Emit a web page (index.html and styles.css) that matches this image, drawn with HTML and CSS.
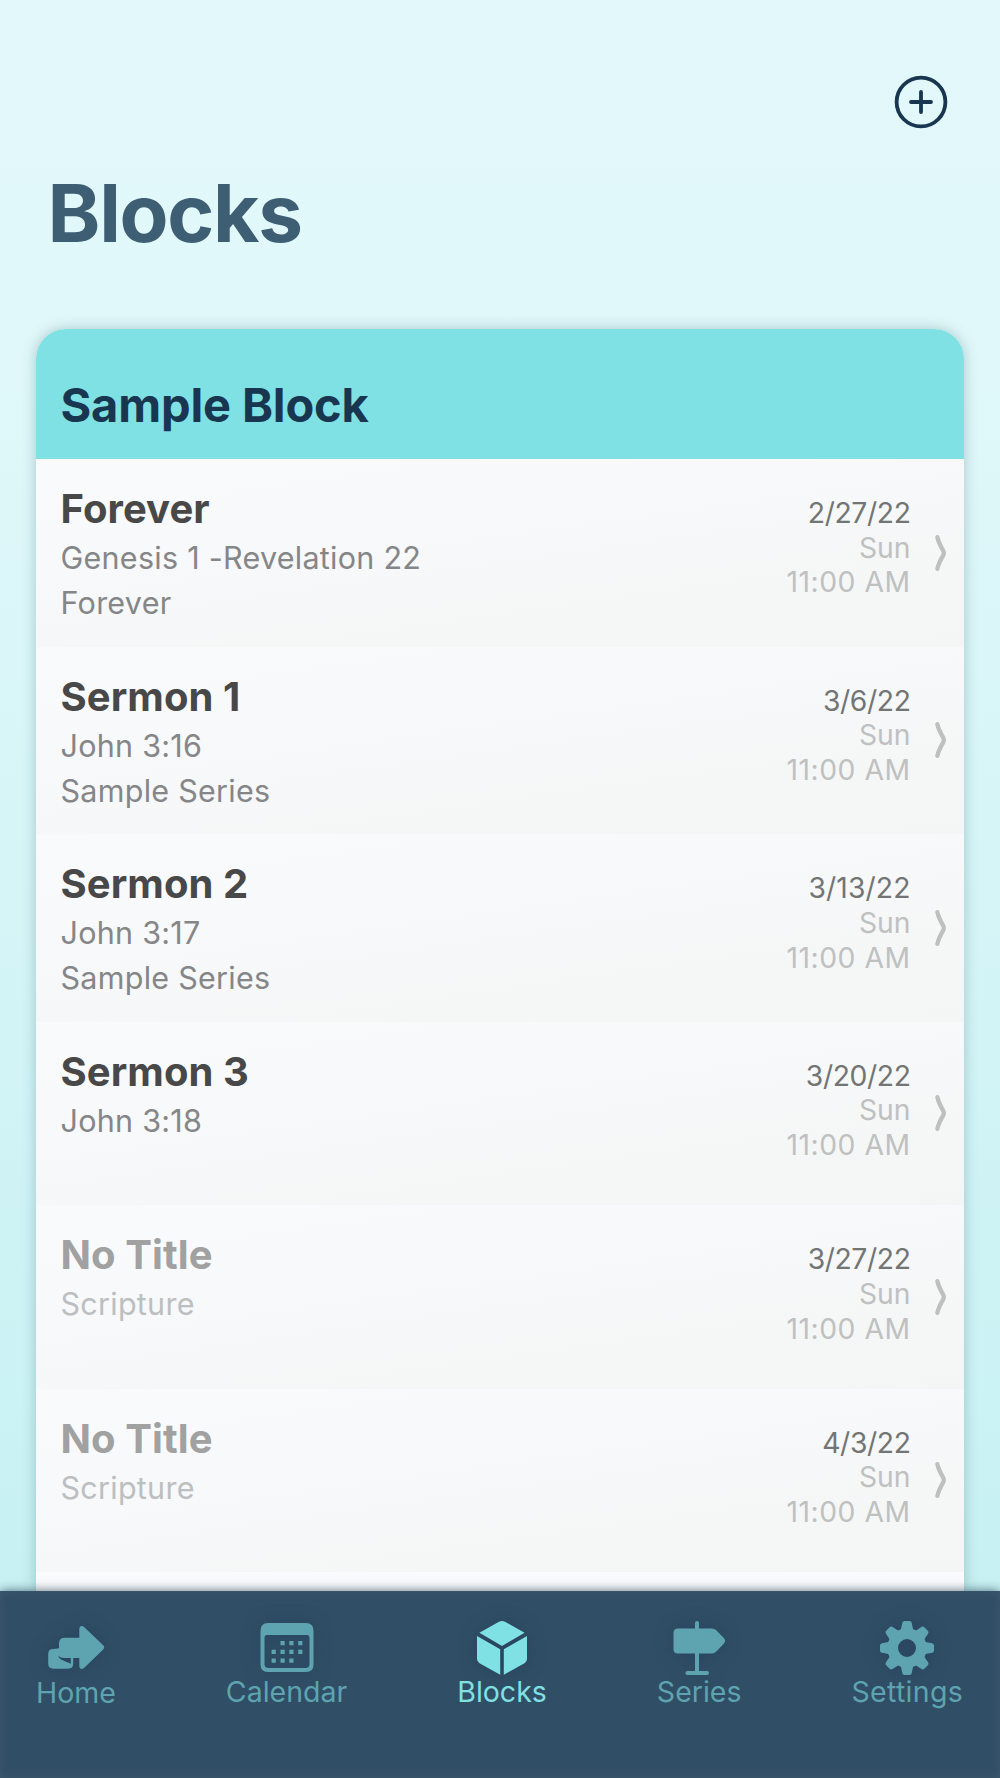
FILE: index.html
```
<!DOCTYPE html>
<html lang="en">
<head>
<meta charset="utf-8">
<title>Blocks</title>
<link rel="stylesheet" href="styles.css">
</head>
<body>
<svg class="defs" width="0" height="0" aria-hidden="true">
  <symbol id="chevron" viewBox="0 0 12 36"><path d="M2.400 2.200Q3.500 7.500 8.200 15.600Q9.400 18 8.200 20.400Q3.500 28.500 2.400 33.800" fill="none" stroke="currentColor" stroke-width="4.300" stroke-linecap="round" stroke-linejoin="round"/></symbol>
</svg>
<div class="app">
  <header class="top">
    <button class="add" aria-label="Add block">
      <svg width="54" height="54" viewBox="0 0 54 54" fill="none" stroke="currentColor" stroke-width="3.800"><circle cx="27" cy="27" r="24.400"/><path d="M27 17v20M17 27h20" stroke-linecap="round"/></svg>
    </button>
    <h1 class="page-title">Blocks</h1>
  </header>
  <main class="card">
    <h2 class="card-title">Sample Block</h2>
    <ul class="rows">
      <li class="row">
        <div class="info"><h3>Forever</h3><p>Genesis 1 -Revelation 22</p><p>Forever</p></div>
        <div class="when"><time>2/27/22</time><span>Sun</span><span class="hour">11:00 AM</span></div>
        <svg class="chevron"><use href="#chevron"/></svg>
      </li>
      <li class="row">
        <div class="info"><h3>Sermon 1</h3><p>John 3:16</p><p>Sample Series</p></div>
        <div class="when"><time>3/6/22</time><span>Sun</span><span class="hour">11:00 AM</span></div>
        <svg class="chevron"><use href="#chevron"/></svg>
      </li>
      <li class="row">
        <div class="info"><h3>Sermon 2</h3><p>John 3:17</p><p>Sample Series</p></div>
        <div class="when"><time class="wide">3/13/22</time><span>Sun</span><span class="hour">11:00 AM</span></div>
        <svg class="chevron"><use href="#chevron"/></svg>
      </li>
      <li class="row short">
        <div class="info"><h3>Sermon 3</h3><p>John 3:18</p></div>
        <div class="when"><time>3/20/22</time><span>Sun</span><span class="hour">11:00 AM</span></div>
        <svg class="chevron"><use href="#chevron"/></svg>
      </li>
      <li class="row short empty">
        <div class="info"><h3>No Title</h3><p>Scripture</p></div>
        <div class="when"><time>3/27/22</time><span>Sun</span><span class="hour">11:00 AM</span></div>
        <svg class="chevron"><use href="#chevron"/></svg>
      </li>
      <li class="row short empty">
        <div class="info"><h3>No Title</h3><p>Scripture</p></div>
        <div class="when"><time>4/3/22</time><span>Sun</span><span class="hour">11:00 AM</span></div>
        <svg class="chevron"><use href="#chevron"/></svg>
      </li>
    </ul>
  </main>
  <nav class="tabs">
    <a class="tab home">
      <svg width="58" height="58" viewBox="0 0 58 58" fill="currentColor"><path fill-rule="evenodd" d="M12 28.200V23.500Q12 17.700 17.800 17.700H32.300V9.500Q32.300 6 34.700 6Q36 6 37.300 7.200L56.200 25.300Q58.200 27.300 56.200 29.400L37.300 47.700Q36 48.900 34.700 48.900Q32.300 48.900 32.300 45.500V38H26.200V43.500Q26.200 48.700 21 48.700H6.500Q1.200 48.700 1.200 43.500V34.200Q1.200 29 6 29Q9 28.600 12 28.200ZM11.300 35.800Q13.500 38 17 38H23.800V43.700L14.500 39.700Q11.500 38.200 11.300 35.800Z"/></svg>
      <span>Home</span>
    </a>
    <a class="tab">
      <svg width="54" height="58" viewBox="0 0 54 58" fill="currentColor"><path fill-rule="evenodd" d="M8 3H46Q53.500 3 53.500 10.500V44.500Q53.500 52 46 52H8Q.5 52 .5 44.500V10.500Q.5 3 8 3ZM7 15Q4.500 15 4.500 18V44Q4.500 48 8.500 48H45.500Q49.500 48 49.500 44V18Q49.500 15 47 15Z"/><path d="M20.500 21h4.200v4.200h-4.200zM29.300 21h4.200v4.200h-4.200zM38.200 21h4.200v4.200h-4.200zM11.600 29.800h4.200V34h-4.200zM20.500 29.800h4.200V34h-4.200zM29.300 29.800h4.200V34h-4.200zM38.200 29.800h4.200V34h-4.200zM11.600 38.500h4.200v4.200h-4.200zM20.500 38.500h4.200v4.200h-4.200zM29.300 38.500h4.200v4.200h-4.200z"/></svg>
      <span>Calendar</span>
    </a>
    <a class="tab active">
      <svg width="52" height="58" viewBox="0 0 52 58" fill="currentColor"><path d="M3.400 12.800L22.500 2Q26 0 29.500 2L48.600 12.800L26 26ZM1 16L24.200 29.300V54.800L3.500 43.200Q1 41.800 1 39ZM51 16L27.800 29.300V54.800L48.500 43.200Q51 41.800 51 39Z"/></svg>
      <span>Blocks</span>
    </a>
    <a class="tab">
      <svg width="54" height="58" viewBox="0 0 54 58" fill="currentColor"><path d="M23 8.500V3Q23 1 25 1T27 3V8.500H40Q42.500 8.500 44.300 10.300L52 18.200Q54.200 20.800 52 23.400L44.300 31.500Q42.500 33.500 40 33.500H27V51H35Q37 51 37 53T35 55H15.500Q13.500 55 13.500 53T15.500 51H23V33.500H6Q1.500 33.500 1.500 29V13Q1.500 8.500 6 8.500Z"/></svg>
      <span>Series</span>
    </a>
    <a class="tab">
      <svg width="54" height="58" viewBox="0 0 54 58" fill="currentColor"><defs><path id="tooth" d="M20 13Q21.300 8 22 4.200Q22.500 1 24.500 1H29.500Q31.500 1 32 4.200Q32.700 8 34 13Z"/></defs><path fill-rule="evenodd" d="M27 8.300A19.700 19.700 0 1 1 27 47.700A19.700 19.700 0 1 1 27 8.300ZM27 19A9 9 0 1 0 27 37A9 9 0 1 0 27 19Z"/><use href="#tooth"/><use href="#tooth" transform="rotate(45 27 28)"/><use href="#tooth" transform="rotate(90 27 28)"/><use href="#tooth" transform="rotate(135 27 28)"/><use href="#tooth" transform="rotate(180 27 28)"/><use href="#tooth" transform="rotate(225 27 28)"/><use href="#tooth" transform="rotate(270 27 28)"/><use href="#tooth" transform="rotate(315 27 28)"/></svg>
      <span class="loose">Settings</span>
    </a>
  </nav>
</div>
</body>
</html>
```
FILE: styles.css
```
* { box-sizing: border-box; }

body { margin: 0; font-family: Inter, "Liberation Sans", sans-serif; }

h1, h2, h3, p, ul { margin: 0; padding: 0; }

.defs { display: block; }

.app {
  display: flex;
  flex-direction: column;
  width: 1000px;
  height: 1778px;
  overflow: hidden;
  background: linear-gradient(#e2f8fb 0, #e1f8fa 300px, #c7f1f3 1591px);
}

.top {
  display: flex;
  flex: none;
  flex-direction: column;
  height: 329px;
  padding: 75px 52.500px 0 47.500px;
}

.add {
  align-self: flex-end;
  width: 54px;
  height: 54px;
  padding: 0;
  border: 0;
  background: none;
  color: #193650;
}

.add svg { display: block; }

.page-title {
  margin-top: 35px;
  color: #3e5e74;
  font-size: 80px;
  font-weight: 700;
  line-height: 97px;
  letter-spacing: -1.300px;
}

.card {
  flex: 1;
  min-height: 0;
  margin: 0 36px;
  border-radius: 30px 30px 0 0;
  background: #fafbfc;
  box-shadow: 0 0 14px rgba(0, 60, 70, .25);
}

.card-title {
  height: 130px;
  padding: 47px 24.500px 0;
  border-radius: 30px 30px 0 0;
  background: #7fe1e3;
  color: #193650;
  font-size: 47px;
  font-weight: 700;
  line-height: 58px;
  letter-spacing: -.150px;
}

.rows { list-style: none; }

.row {
  display: flex;
  height: 187.600px;
  padding: 0 17px 0 24.500px;
  background: linear-gradient(172deg, #f9fafc 10%, #f5f7f7 75%, #f4f6f6);
}

.row.short { height: 183.400px; }

.info { flex: 1; padding-top: 22px; }

.info h3 {
  margin-bottom: -1px;
  color: #484848;
  font-size: 40px;
  font-weight: 700;
  line-height: 55px;
  letter-spacing: .080px;
}

.info p {
  color: #858688;
  font-size: 30.500px;
  line-height: 45px;
  letter-spacing: .270px;
}

.empty h3 { color: #a0a1a0; }
.empty p { color: #bdbebf; }

.when {
  display: flex;
  flex-direction: column;
  align-items: flex-end;
  padding-top: 37px;
  color: #bfc0c0;
  font-size: 28.300px;
  line-height: 34.700px;
}

.when time {
  color: #737574;
  letter-spacing: -.400px;
}

.when .wide { letter-spacing: .100px; }

.when .hour { letter-spacing: .500px; }

.chevron {
  align-self: center;
  width: 12px;
  height: 36px;
  margin-left: 24.500px;
  color: #bebfbf;
}

.tabs {
  display: flex;
  flex: none;
  justify-content: space-between;
  height: 187px;
  padding: 29px 37px 0 36px;
  background: #304e66;
  box-shadow: 0 0 10px rgba(35, 60, 80, .75), inset 0 0 10px rgba(80, 105, 122, .45);
  position: relative;
}

.tab {
  display: flex;
  flex-direction: column;
  align-items: center;
  color: #5ea4b0;
  font-size: 28.500px;
  line-height: 28px;
}

.tab svg { display: block; filter: drop-shadow(0 0 8px rgba(35, 60, 90, .6)); }
.tab.active { color: #7fe1e3; }
.home span { padding-top: 1px; }
.loose { letter-spacing: .300px; }
```
